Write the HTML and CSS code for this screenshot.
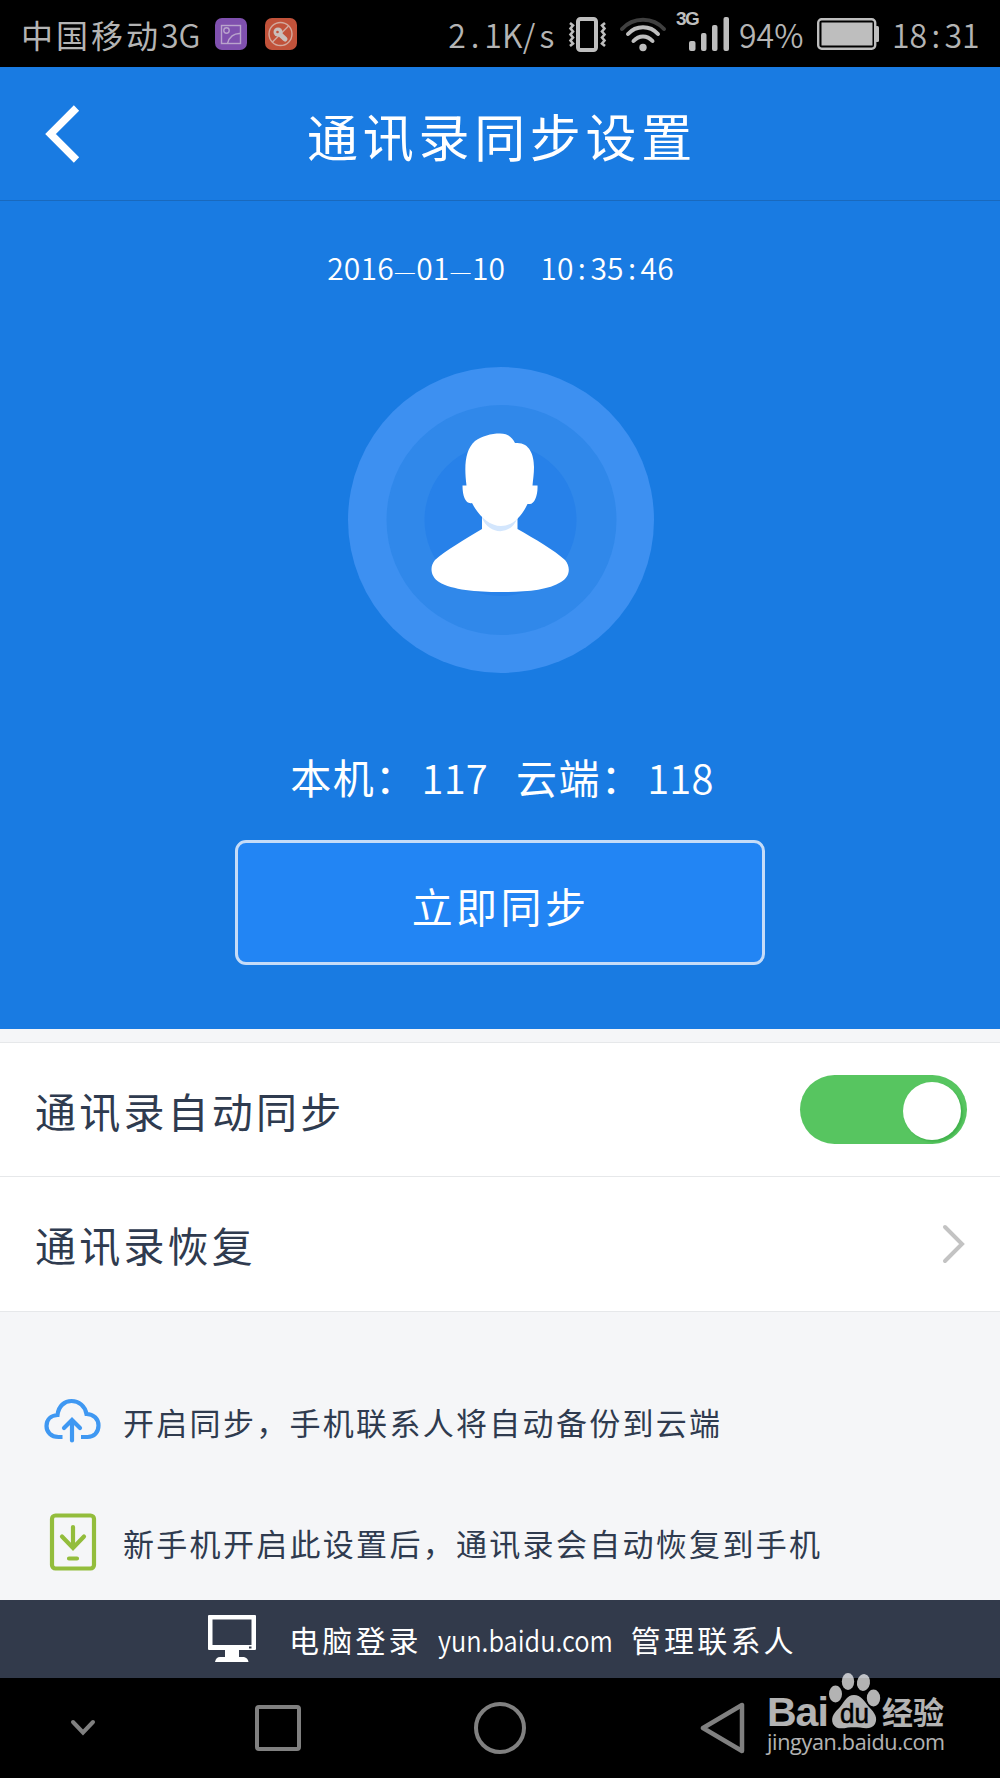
FILE: index.html
```html
<!doctype html>
<html lang="zh-CN">
    <head>
        <meta charset="utf-8">
        <title>通讯录同步设置</title>
        <meta name="viewport" content="width=device-width, initial-scale=1">
        <link rel="stylesheet" href="styles.css">
    </head>
    <body>
        <section class="statusbar">
            <div class="carrier">中国移动<span class="thin">3G</span></div>
            <svg class="app-icon" width="32" height="32" viewBox="0 0 32 32" fill="none" stroke="#b9a3cc" stroke-width="1.4">
                <rect width="32" height="32" rx="7" fill="#7f50ae" stroke="none" />
                <rect x="6.500" y="7.500" width="19" height="18" />
                <circle cx="11.500" cy="12.500" r="2.700" />
                <path d="M12.500 25.500C14 19 19 15 25.500 15.500" />
            </svg>
            <svg class="app-icon second" width="32" height="32" viewBox="0 0 32 32" fill="none" stroke="#d3a99d" stroke-width="1.4">
                <rect width="32" height="32" rx="7" fill="#c1523a" stroke="none" />
                <circle cx="15.500" cy="16" r="11.500" />
                <path d="M7.500 24L23.500 8" />
                <path d="M13 14.500L20 21" stroke="#c9bfbc" stroke-width="5" stroke-linecap="round" />
                <circle cx="13" cy="14" r="4.500" fill="#c9bfbc" stroke="none" />
                <circle cx="12.500" cy="14" r="1.300" fill="#c1523a" stroke="none" />
            </svg>

            <div class="thin speed"><span>2</span><span>.</span><span>1</span><span>K</span><span>/</span><span>s</span></div>
            <svg class="vibrate" width="40" height="36" viewBox="0 0 40 36" fill="none" stroke="#bebebe" stroke-width="2.600">
                <rect x="10" y="3" width="18" height="31" rx="2.500" stroke-width="4" />
                <path d="M2 7L5 9.500L2.500 12.500L5 15.500L2.500 18.500L5 21.500L2.500 24.500L5 27.500L2 30" />
                <path d="M37 7L34 9.500L36.500 12.500L34 15.500L36.500 18.500L34 21.500L36.500 24.500L34 27.500L37 30" />
            </svg>
            <svg class="wifi" width="48" height="36" viewBox="0 0 48 36" fill="none" stroke="#bebebe" stroke-width="4" stroke-linecap="round">
                <path d="M3 13C14 .500 34 .500 45 13" stroke="#404040" />
                <path d="M9 18C17 9 31 9 39 18" />
                <path d="M14.500 25C20 19 28 19 33.500 25" />
                <circle cx="24" cy="31.500" r="3.700" fill="#bebebe" stroke="none" />
            </svg>
            <div class="signal">
                <b>3G</b>
                <svg width="42" height="36" viewBox="0 0 42 36" fill="#bebebe">
                    <rect x="1" y="25" width="6.500" height="10" rx="2" />
                    <rect x="13" y="17" width="5.500" height="18" rx="2" />
                    <rect x="24" y="9" width="5.500" height="26" rx="2" />
                    <rect x="35.500" y="1" width="5.500" height="34" rx="2" />
                </svg>
            </div>
            <div class="thin percent">94%</div>
            <svg class="battery" width="62" height="32" viewBox="0 0 62 32" fill="#bebebe">
                <rect x="1.200" y="1.200" width="57" height="29.500" rx="3.500" fill="none" stroke="#bebebe" stroke-width="2.400" />
                <rect x="4.500" y="4.500" width="51" height="23" />
                <rect x="58" y="8" width="4" height="16" rx="1.500" />
            </svg>
            <div class="thin clock"><span>1</span><span>8</span><span>:</span><span>3</span><span>1</span></div>
        </section>

        <header class="header">
            <svg class="back" width="36" height="60" viewBox="0 0 36 60" fill="none" stroke="#fff" stroke-width="7.500">
                <path d="M32.500 4L6.500 30L32.500 56" />
            </svg>
            <h1>通讯录同步设置</h1>
        </header>

        <section class="hero">
            <div class="datetime">
                <div>2016<em>—</em>01<em>—</em>10</div>
                <div>10<span>:</span>35<span>:</span>46</div>
            </div>

            <svg class="avatar" width="306" height="306" viewBox="0 0 306 306">
                <circle cx="153" cy="153" r="153" fill="#3d90f1" />
                <circle cx="153.500" cy="153" r="115" fill="#3088ea" />
                <circle cx="152.500" cy="153" r="76" fill="#2781e9" />
                <path fill="#fff" d="M134 146V162C116 173 98 183 87 193C81 200 83 210 91 215C104 223 129 225 152 225C176 225 200 223.500 213 215C222 210 223 200 217 193C206 183 187 172 169.500 162V146Z" />
                <path fill="#d3e6fd" d="M134 151C141 168 163 169 169.500 151V146H134Z" />
                <path fill="#fff" d="M152 66.500C160 66.500 164 70 167 76C181 74.500 186 87 186 100C186 107 185 113 184.500 118.500H189.500C190 128 186.500 138 181 137H179.500C174 149 165 159 153 159C141 159 130 148 124 136C118 137.500 114.500 130 114.500 118.500H118.500C116 99 117 83 127 74C134 69 143 66.500 152 66.500Z" />
            </svg>

            <div class="counts">
                <div>本机：<b>117</b></div>
                <div>云端：<b>118</b></div>
            </div>
            <button class="sync">立即同步</button>
        </section>

        <section class="settings">
            <div class="row">
                <span>通讯录自动同步</span>
                <div class="toggle"><div class="knob"></div></div>
            </div>
            <div class="row">
                <span>通讯录恢复</span>
                <svg class="chevron" width="24" height="40" viewBox="0 0 24 40" fill="none" stroke="#c3c3c3" stroke-width="4" stroke-linecap="round">
                    <path d="M3 3L20 20L3 37" />
                </svg>
            </div>
        </section>

        <section class="tips">
            <div class="tip">
                <svg width="58" height="58" viewBox="0 0 58 58" fill="none" stroke="#3f98f2" stroke-width="4.200">
                    <path d="M18.500 45H14.500C7 45 2.500 40 2.500 34C2.500 27.500 7 23.500 13.500 23C14.500 14 20.500 9 27.500 9C35 9 41 14 42.500 22C49.500 22 54.500 27 54.500 33.500C54.500 40.500 50 45 43.500 45H37" />
                    <path d="M28 48.500V29M20 36L28 28L36 36" stroke-linecap="round" />
                </svg>
                <span>开启同步，手机联系人将自动备份到云端</span>
            </div>
            <div class="tip">
                <svg width="58" height="58" viewBox="0 0 58 58" fill="none" stroke="#93bd3c" stroke-width="4.200" stroke-linecap="round">
                    <rect x="8" y="2.500" width="42" height="53" rx="3.500" />
                    <path d="M29 14V35M18 23.500L29 35L40 23.500M25 45.500H33" />
                </svg>
                <span>新手机开启此设置后，通讯录会自动恢复到手机</span>
            </div>
        </section>

        <footer class="desktop">
            <svg width="48" height="48" viewBox="0 0 48 48" fill="#fff">
                <path fill-rule="evenodd" d="M0 1Q0 0 1 0H47Q48 0 48 1V34Q48 35 47 35H31V42H36Q40 43 40.500 47H7Q8 42 12 42H17V35H1Q0 35 0 34ZM4.500 4.500V30H43.500V4.500ZM41 31.500V33.500H43.500V31.500Z" />
            </svg>
            <div class="login">电脑登录</div>
            <div class="url"><span>yun.baidu.com</span></div>
            <div class="login">管理联系人</div>
        </footer>

        <nav class="navbar">
            <svg class="hide" width="26" height="18" viewBox="0 0 26 18" fill="none" stroke="#808080" stroke-width="4" stroke-linecap="round">
                <path d="M3 3L13 13.500L23 3" />
            </svg>
            <svg class="recent" width="48" height="48" viewBox="0 0 48 48" fill="none" stroke="#808080" stroke-width="4">
                <rect x="3" y="3" width="42" height="42" rx="2" />
            </svg>
            <svg class="home" width="54" height="54" viewBox="0 0 54 54" fill="none" stroke="#808080" stroke-width="4">
                <circle cx="27" cy="27" r="24" />
            </svg>
            <svg class="prev" width="46" height="54" viewBox="0 0 46 54" fill="none" stroke="#808080" stroke-width="4.500" stroke-linejoin="round">
                <path d="M42 4V50L3 27Z" />
            </svg>
        </nav>

        <aside class="watermark">
            <div class="brand">
                <span class="bai">Bai</span>
                <svg width="54" height="58" viewBox="0 0 54 58">
                    <g fill="#fff">
                        <ellipse cx="7.500" cy="22" rx="6.500" ry="8.500" />
                        <ellipse cx="20" cy="9.500" rx="6.200" ry="8.500" />
                        <ellipse cx="35.500" cy="10.500" rx="6.500" ry="8.500" transform="rotate(10 35.500 10.500)" />
                        <ellipse cx="45.500" cy="26" rx="6.700" ry="8.500" />
                        <path d="M26 23C33 23 36 29 41 35C47 41 50 46 47 52C44 57 38 56.500 32 55.500C28 55 24 55 20 55.500C13 57 8 57 5 52C2 45 7 40 12 35C17 29 19 23 26 23Z" />
                    </g>
                    <text x="12" y="51" textLength="29" lengthAdjust="spacingAndGlyphs">du</text>
                </svg>
                <span class="exp">经验</span>
            </div>
            <div class="site">jingyan.baidu.com</div>
        </aside>
    </body>
</html>
```

FILE: styles.css
```css
html, body {
    margin: 0;
    width: 1000px;
    height: 1778px;
    background: #000;
    font-family: "Noto Sans CJK SC", sans-serif;
}

body {
    position: relative;
    overflow: hidden;
    display: flex;
    flex-direction: column;
}

svg {
    display: block;
    flex: none;
}

.statusbar {
    height: 67px;
    box-sizing: border-box;
    padding-left: 21px;
    display: flex;
    align-items: center;
    color: #b4b4b4;
    font-size: 32px;
    line-height: 64px;
    white-space: nowrap;
}

.carrier {
    width: 194px;
    letter-spacing: 3px;
}

.thin {
    font-weight: 350;
    letter-spacing: 0;
}

.app-icon.second {
    margin-left: 18px;
}

.speed, .clock {
    display: flex;
}

.speed span, .clock span {
    width: 18px;
    text-align: center;
}

.speed {
    margin-left: 151px;
    width: 120px;
}

.clock span {
    width: 17.5px;
}

.wifi {
    margin-left: 11px;
}

.signal {
    position: relative;
    margin-left: 21px;
    width: 51px;
}

.signal b {
    position: absolute;
    left: -12px;
    top: -7px;
    font: bold 19px/19px "Liberation Sans", sans-serif;
    letter-spacing: -1.5px;
    color: #bebebe;
}

.percent {
    width: 78px;
}

.clock {
    margin-left: 13px;
}

.header {
    height: 133px;
    background: #197be2;
    border-bottom: 1px solid #1969bd;
    display: flex;
    align-items: center;
    justify-content: center;
    color: #fff;
}

.back {
    margin-left: 44px;
}

.header h1 {
    flex: 1;
    margin: 2px 76px 0 0;
    text-align: center;
    font-size: 51px;
    font-weight: 400;
    letter-spacing: 4.7px;
}

.hero {
    height: 828px;
    background: #197be2;
    color: #fff;
    display: flex;
    flex-direction: column;
    align-items: center;
}

.datetime {
    margin: 46px 0 0 1px;
    height: 41px;
    display: flex;
    gap: 35px;
    font-size: 30px;
    font-weight: 350;
    line-height: 40px;
    letter-spacing: .2px;
}

.datetime em {
    font-style: normal;
    font-weight: 300;
    font-size: 25px;
}

.datetime span {
    display: inline-block;
    width: 16.8px;
    text-align: center;
}

.avatar {
    margin: 79px 0 0 2px;
}

.counts {
    margin: 73px 0 0 4px;
    height: 60px;
    display: flex;
    gap: 28px;
    font-size: 41px;
    line-height: 60px;
    letter-spacing: 1.4px;
}

.counts b {
    font-size: 40px;
    font-weight: 350;
    letter-spacing: .2px;
    margin-left: 4px;
}

.sync {
    margin: 34px 1px 0 0;
    width: 530px;
    height: 125px;
    padding: 4px 0 0 2px;
    border: 3px solid #c5dcf8;
    border-radius: 11px;
    background: #2285f4;
    color: #fff;
    font: 400 41px "Noto Sans CJK SC", sans-serif;
    letter-spacing: 3.4px;
}

.settings {
    margin-top: 13px;
    border-top: 1px solid #e6e8ea;
    background: #fff;
    box-shadow: 0 -13px 0 #f5f6f8;
}

.row {
    height: 134px;
    box-sizing: border-box;
    padding: 0 33px 0 35px;
    border-bottom: 1px solid #e6e8ea;
    display: flex;
    align-items: center;
    justify-content: space-between;
    color: #2f3b4f;
    font-size: 41px;
    letter-spacing: 3.2px;
}

.row + .row {
    height: 135px;
}

.toggle {
    width: 167px;
    height: 69px;
    border-radius: 35px;
    background: #57c560;
    display: flex;
    align-items: center;
    justify-content: flex-end;
}

.knob {
    width: 58px;
    height: 58px;
    margin: 2px 6px 0 0;
    border-radius: 50%;
    background: #fff;
    box-shadow: 2px 2px 2px #42b34d;
}

.chevron {
    margin-right: 1px;
}

.tips {
    height: 288px;
    background: #f5f6f8;
    padding-left: 44px;
    box-sizing: border-box;
    padding-top: 80px;
}

.tip {
    height: 58px;
    margin-bottom: 63px;
    display: flex;
    align-items: center;
    gap: 21px;
    color: #2f3b4f;
    font-size: 31px;
    letter-spacing: 2.3px;
    white-space: nowrap;
}

.desktop {
    height: 78px;
    background: #323a4b;
    padding-left: 208px;
    display: flex;
    align-items: center;
    color: #fff;
    font-size: 30px;
}

.login {
    letter-spacing: 3.2px;
}

.desktop svg {
    margin-right: 33px;
}

.url {
    width: 193px;
    margin-left: 16px;
    font-size: 29px;
    font-weight: 350;
}

.url span {
    display: inline-block;
    transform: scaleX(.875);
    transform-origin: left;
}

.navbar {
    height: 100px;
    display: flex;
    align-items: center;
}

.hide {
    margin-left: 70px;
}

.recent {
    margin-left: 158px;
}

.home {
    margin-left: 171px;
}

.prev {
    margin-left: 173px;
}

.watermark {
    position: absolute;
    left: 767px;
    top: 1672px;
    width: 180px;
    color: #fff;
    opacity: .7;
}

.brand {
    display: flex;
    align-items: flex-end;
    height: 58px;
}

.bai {
    width: 61px;
    font: bold 41px/36px "Liberation Sans", sans-serif;
    letter-spacing: -1px;
}

.brand text {
    font: 28px "Liberation Sans", sans-serif;
    fill: #000;
    stroke: #000;
    stroke-width: .6;
}

.exp {
    font: bold 31px/33px "Liberation Sans", "Noto Sans CJK SC", sans-serif;
}

.site {
    margin-top: -2px;
    font: 21.6px/28px "Open Sans", sans-serif;
    letter-spacing: -.35px;
}
```
